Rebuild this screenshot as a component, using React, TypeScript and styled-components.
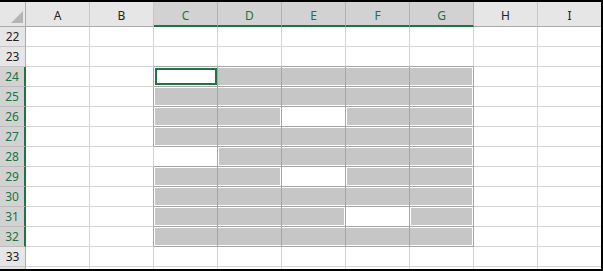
import React from 'react';
import styled, { createGlobalStyle } from 'styled-components';

const GREEN = '#217346';

const GlobalStyle = createGlobalStyle`
  html, body { margin: 0; padding: 0; background: #fff; }
  body { font-family: "Noto Sans", "Segoe UI", sans-serif; }
`;

const Frame = styled.div`
  width: 603px;
  height: 271px;
  box-sizing: border-box;
  border-top: 2px solid #000;
  border-right: 2px solid #000;
  border-bottom: 2px solid #000;
  overflow: hidden;
  background: #fff;
`;

const Sheet = styled.div`
  display: grid;
  grid-template-columns: 26px repeat(9, 64px);
  grid-template-rows: 25px;
  grid-auto-rows: 20px;
  width: 602px;
  font-size: 12px;
  line-height: 16px;
`;

const Corner = styled.div`
  box-sizing: border-box;
  background: #e6e6e6;
  border-right: 1px solid #ababab;
  border-bottom: 1px solid #ababab;
  display: flex;
  justify-content: flex-end;
  align-items: flex-end;
  padding: 0 2px 3px 0;
`;

const ColHeader = styled.div<{ $selected: boolean }>`
  box-sizing: border-box;
  display: flex;
  justify-content: center;
  align-items: center;
  padding-top: ${(p) => (p.$selected ? '5px' : '4px')};
  background: ${(p) => (p.$selected ? '#d2d2d2' : '#e6e6e6')};
  color: ${(p) => (p.$selected ? GREEN : '#222')};
  border-right: 1px solid ${(p) => (p.$selected ? '#b4b4b4' : '#c6c6c6')};
  border-bottom: ${(p) => (p.$selected ? `2px solid ${GREEN}` : '1px solid #ababab')};
`;

const RowHeader = styled.div<{ $selected: boolean }>`
  box-sizing: border-box;
  display: flex;
  justify-content: center;
  align-items: center;
  padding-top: 1px;
  background: ${(p) => (p.$selected ? '#d2d2d2' : '#e6e6e6')};
  color: ${(p) => (p.$selected ? GREEN : '#222')};
  border-right: ${(p) => (p.$selected ? `2px solid ${GREEN}` : '1px solid #ababab')};
  border-bottom: 1px solid ${(p) => (p.$selected ? '#bcbcbc' : '#c6c6c6')};
`;

const Cell = styled.div<{
  $fill: boolean;
  $darkRight: boolean;
  $darkBottom: boolean;
  $edges: string;
  $active: boolean;
}>`
  box-sizing: border-box;
  display: flex;
  background: ${(p) => (p.$fill ? '#c6c6c6' : '#fff')};
  border-right: 1px solid ${(p) => (p.$darkRight ? '#a5a5a5' : '#d4d4d4')};
  border-bottom: 1px solid ${(p) => (p.$darkBottom ? '#a5a5a5' : '#d4d4d4')};
  box-shadow: ${(p) => p.$edges};
  padding: ${(p) => (p.$active ? '1px 0 1px 1px' : '0')};
`;

const ActiveBox = styled.div`
  flex: 1;
  box-sizing: border-box;
  border: 2px solid ${GREEN};
  background: #fff;
`;

const COLS = ['A', 'B', 'C', 'D', 'E', 'F', 'G', 'H', 'I'];
const ROWS = Array.from({ length: 13 }, (_, i) => 22 + i);
const LAST_VISIBLE_ROW = 33;

// selection ranges per row: [startCol, endCol] (0-based column index)
const RANGES: Record<number, [number, number][]> = {
  24: [[2, 6]],
  25: [[2, 6]],
  26: [[2, 3], [5, 6]],
  27: [[2, 6]],
  28: [[3, 6]],
  29: [[2, 3], [5, 6]],
  30: [[2, 6]],
  31: [[2, 4], [6, 6]],
  32: [[2, 6]],
};
const ACTIVE = { row: 24, col: 2 };

const findRange = (r: number, c: number) =>
  (RANGES[r] || []).find(([a, b]) => c >= a && c <= b);
const isSel = (r: number, c: number) => !!findRange(r, c);

const SEL_COLS = new Set([2, 3, 4, 5, 6]);
const SEL_ROWS = new Set([24, 25, 26, 27, 28, 29, 30, 31, 32]);

function edgesFor(r: number, c: number): string {
  const rg = findRange(r, c);
  if (!rg) return 'none';
  const s = ['inset 0 1px 0 #fff', 'inset 0 -1px 0 #fff'];
  if (c === rg[0]) s.push('inset 1px 0 0 #fff');
  if (c === rg[1]) s.push('inset -1px 0 0 #fff');
  return s.join(', ');
}

export default function App() {
  return (
    <>
      <GlobalStyle />
      <Frame>
        <Sheet>
          <Corner>
            <svg width="12" height="12" viewBox="0 0 12 12">
              <polygon points="12,0 12,12 0,12" fill="#b5b5b5" />
            </svg>
          </Corner>
          {COLS.map((c, i) => (
            <ColHeader key={c} $selected={SEL_COLS.has(i)}>
              {c}
            </ColHeader>
          ))}
          {ROWS.map((r) => (
            <React.Fragment key={r}>
              <RowHeader $selected={SEL_ROWS.has(r)}>
                {r <= LAST_VISIBLE_ROW ? r : null}
              </RowHeader>
              {COLS.map((c, i) => {
                const sel = isSel(r, i);
                const active = r === ACTIVE.row && i === ACTIVE.col;
                return (
                  <Cell
                    key={c + r}
                    $fill={sel && !active}
                    $darkRight={sel || isSel(r, i + 1)}
                    $darkBottom={sel || isSel(r + 1, i)}
                    $edges={active ? 'none' : edgesFor(r, i)}
                    $active={active}
                  >
                    {active && <ActiveBox />}
                  </Cell>
                );
              })}
            </React.Fragment>
          ))}
        </Sheet>
      </Frame>
    </>
  );
}
